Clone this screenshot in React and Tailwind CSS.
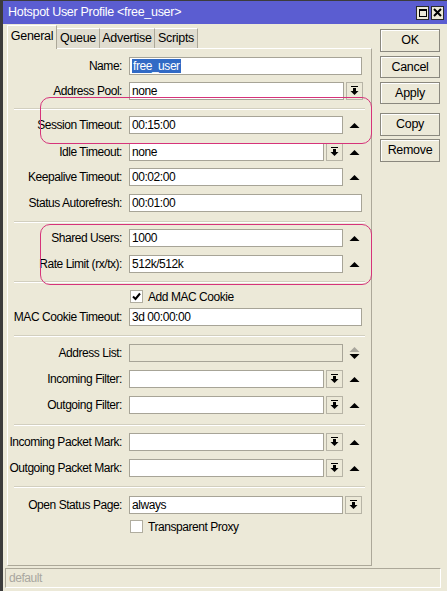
import { useState } from "react";

const font = { fontFamily: '"Liberation Sans", Arial, sans-serif' };

function UpArrow({ muted }) {
    return (
        <svg width="11" height="7" viewBox="0 0 11 7" className="shrink-0">
            <polygon points="0.5,6 5.5,1 10.5,6" fill={muted ? "#a8a69c" : "#000"} />
        </svg>
    );
}

function UpDown() {
    return (
        <svg width="11" height="14" viewBox="0 0 11 14" className="shrink-0">
            <polygon points="0.5,6 5.5,1 10.5,6" fill="#a8a69c" />
            <polygon points="0.5,8 10.5,8 5.5,13" fill="#000" />
        </svg>
    );
}

function DropButton() {
    return (
        <div className="flex h-[18px] w-[17px] shrink-0 items-center justify-center border border-[#b7b4a6] bg-[#ece9d8]">
            <svg width="9" height="10" viewBox="0 0 9 10">
                <rect x="1" y="0" width="7" height="1" fill="#000" />
                <rect x="3" y="2" width="3" height="3" fill="#000" />
                <polygon points="0.5,5 8.5,5 4.5,9" fill="#000" />
            </svg>
        </div>
    );
}

function Field({ value, w, selected, disabled }) {
    return (
        <div
            className={`flex h-[18px] items-center border border-[#a7a497] pl-[2px] ${disabled ? "bg-[#ece9d8]" : "bg-white"} ${w}`}
        >
            {selected ? (
                <span className="bg-[#316ac5] px-px leading-[14px] text-white">{value}</span>
            ) : (
                <span className="leading-[14px]">{value}</span>
            )}
        </div>
    );
}

function Row({ label, mt, children }) {
    return (
        <div className={`flex h-[18px] items-center ${mt}`}>
            <div className="w-[115px] shrink-0 pr-px text-right whitespace-nowrap">{label}</div>
            <div className="ml-[6px] flex items-center gap-[2px]">{children}</div>
        </div>
    );
}

function Sep({ mt }) {
    return <div className={`mx-[6px] h-[2px] border-t border-b border-t-[#d2cfbf] border-b-white ${mt}`} />;
}

function Check({ label, checked, onClick, mt }) {
    return (
        <div className={`flex h-[13px] items-center ${mt}`}>
            <div className="ml-[122px] flex items-center gap-[5px]" onClick={onClick}>
                <div className="flex h-[13px] w-[13px] items-center justify-center border border-[#b0ad9f] bg-white">
                    {checked && (
                        <svg width="9" height="9" viewBox="0 0 9 9">
                            <path d="M1 4.5 L3.5 7 L8 1.5" stroke="#000" strokeWidth="2" fill="none" />
                        </svg>
                    )}
                </div>
                <span className="whitespace-nowrap">{label}</span>
            </div>
        </div>
    );
}

function SideButton({ children, mt, h }) {
    return (
        <button className={`flex w-[60px] items-center justify-center border border-[#8a887e] bg-[#ece9d8] shadow-[inset_1px_1px_0_#fff] ${mt} ${h}`}>
            {children}
        </button>
    );
}

export default function App() {
    const [macCookie, setMacCookie] = useState(true);
    const [transparent, setTransparent] = useState(false);

    return (
        <div
            style={font}
            className="relative h-[591px] w-[447px] overflow-hidden border-l-[3px] border-t border-[#3c3c3c] bg-[#ece9d8] text-[12px] tracking-[-0.45px] text-black"
        >
            {/* title bar */}
            <div className="flex h-[23px] items-center justify-between bg-[#5b5dd1] pl-[5px] pr-[3px] text-[12.5px] tracking-[-0.3px] text-white">
                <span className="whitespace-nowrap">Hotspot User Profile &lt;free_user&gt;</span>
                <div className="flex gap-[2px]">
                    <div className="flex h-[14px] w-[13px] items-center justify-center border border-[#2a2a2a] bg-[#ece9d8]">
                        <div className="h-[8px] w-[8px] border border-t-2 border-black" />
                    </div>
                    <div className="flex h-[14px] w-[13px] items-center justify-center border border-[#2a2a2a] bg-[#ece9d8]">
                        <svg width="9" height="9" viewBox="0 0 9 9">
                            <path d="M1 1 L8 8 M8 1 L1 8" stroke="#000" strokeWidth="2" />
                        </svg>
                    </div>
                </div>
            </div>

            <div className="flex pl-[4px]">
                {/* tabs + general page */}
                <div className="flex w-[365px] flex-col">
                    <div className="flex h-[24px] items-end text-[12.5px] tracking-[-0.3px]">
                        <div className="relative z-10 -mb-px flex h-[24px] w-[50px] items-center justify-center border-l border-t border-r border-l-white border-t-white border-r-[#aca899] bg-[#ece9d8] pb-[2px]">
                            General
                        </div>
                        <div className="flex h-[20px] w-[43px] items-center justify-center border-t border-r border-t-white border-r-[#aca899] bg-[#e0ddd0]">
                            Queue
                        </div>
                        <div className="flex h-[20px] w-[55px] items-center justify-center border-t border-r border-t-white border-r-[#aca899] bg-[#e0ddd0]">
                            Advertise
                        </div>
                        <div className="flex h-[20px] w-[43px] items-center justify-center border-t border-r border-t-white border-r-[#aca899] bg-[#e0ddd0]">
                            Scripts
                        </div>
                    </div>

                    <div className="h-[518px] border border-l-white border-t-white border-r-[#aca899] border-b-[#aca899]">
                        <Row label="Name:" mt="mt-[8px]">
                            <Field value="free_user" w="w-[233px]" selected />
                        </Row>
                        <Row label="Address Pool:" mt="mt-[7px]">
                            <Field value="none" w="w-[215px]" />
                            <DropButton />
                        </Row>
                        <Sep mt="mt-[8px]" />
                        <Row label="Session Timeout:" mt="mt-[6px]">
                            <Field value="00:15:00" w="w-[214px]" />
                            <span className="ml-[4px]"><UpArrow /></span>
                        </Row>
                        <Row label="Idle Timeout:" mt="mt-[9px]">
                            <Field value="none" w="w-[195px]" />
                            <DropButton />
                            <span className="ml-[4px]"><UpArrow /></span>
                        </Row>
                        <Row label="Keepalive Timeout:" mt="mt-[7px]">
                            <Field value="00:02:00" w="w-[214px]" />
                            <span className="ml-[4px]"><UpArrow /></span>
                        </Row>
                        <Row label="Status Autorefresh:" mt="mt-[8px]">
                            <Field value="00:01:00" w="w-[233px]" />
                        </Row>
                        <Sep mt="mt-[9px]" />
                        <Row label="Shared Users:" mt="mt-[6px]">
                            <Field value="1000" w="w-[214px]" />
                            <span className="ml-[4px]"><UpArrow /></span>
                        </Row>
                        <Row label="Rate Limit (rx/tx):" mt="mt-[8px]">
                            <Field value="512k/512k" w="w-[214px]" />
                            <span className="ml-[4px]"><UpArrow /></span>
                        </Row>
                        <Sep mt="mt-[8px]" />
                        <Check
                            label="Add MAC Cookie"
                            checked={macCookie}
                            onClick={() => setMacCookie(!macCookie)}
                            mt="mt-[7px]"
                        />
                        <Row label="MAC Cookie Timeout:" mt="mt-[5px]">
                            <Field value="3d 00:00:00" w="w-[233px]" />
                        </Row>
                        <Sep mt="mt-[9px]" />
                        <Row label="Address List:" mt="mt-[7px]">
                            <Field value="" w="w-[214px]" disabled />
                            <span className="ml-[4px]"><UpDown /></span>
                        </Row>
                        <Row label="Incoming Filter:" mt="mt-[8px]">
                            <Field value="" w="w-[195px]" />
                            <DropButton />
                            <span className="ml-[4px]"><UpArrow /></span>
                        </Row>
                        <Row label="Outgoing Filter:" mt="mt-[8px]">
                            <Field value="" w="w-[195px]" />
                            <DropButton />
                            <span className="ml-[4px]"><UpArrow /></span>
                        </Row>
                        <Sep mt="mt-[10px]" />
                        <Row label="Incoming Packet Mark:" mt="mt-[7px]">
                            <Field value="" w="w-[195px]" />
                            <DropButton />
                            <span className="ml-[4px]"><UpArrow /></span>
                        </Row>
                        <Row label="Outgoing Packet Mark:" mt="mt-[8px]">
                            <Field value="" w="w-[195px]" />
                            <DropButton />
                            <span className="ml-[4px]"><UpArrow /></span>
                        </Row>
                        <Sep mt="mt-[9px]" />
                        <Row label="Open Status Page:" mt="mt-[8px]">
                            <Field value="always" w="w-[214px]" />
                            <DropButton />
                        </Row>
                        <Check
                            label="Transparent Proxy"
                            checked={transparent}
                            onClick={() => setTransparent(!transparent)}
                            mt="mt-[6px]"
                        />
                    </div>
                </div>

                {/* dialog buttons */}
                <div className="ml-[8px] flex flex-col text-[12.5px] tracking-[-0.3px]">
                    <SideButton mt="mt-[5px]" h="h-[23px]">OK</SideButton>
                    <SideButton mt="mt-[4px]" h="h-[22px]">Cancel</SideButton>
                    <SideButton mt="mt-[4px]" h="h-[22px]">Apply</SideButton>
                    <SideButton mt="mt-[9px]" h="h-[23px]">Copy</SideButton>
                    <SideButton mt="mt-[3px]" h="h-[23px]">Remove</SideButton>
                </div>
            </div>

            {/* status bar */}
            <div className="ml-[2px] mt-[2px] flex h-[20px] w-[436px] items-center border border-t-[#aca899] border-l-[#aca899] border-r-white border-b-white pl-[3px] text-[#a9a7a0]">
                default
            </div>

            {/* highlight marks */}
            <div className="pointer-events-none absolute left-[37px] top-[96px] h-[47px] w-[332px] rounded-[10px] border-[1.5px] border-[#d6337a]" />
            <div className="pointer-events-none absolute left-[37px] top-[223px] h-[61px] w-[332px] rounded-[10px] border-[1.5px] border-[#d6337a]" />
        </div>
    );
}
